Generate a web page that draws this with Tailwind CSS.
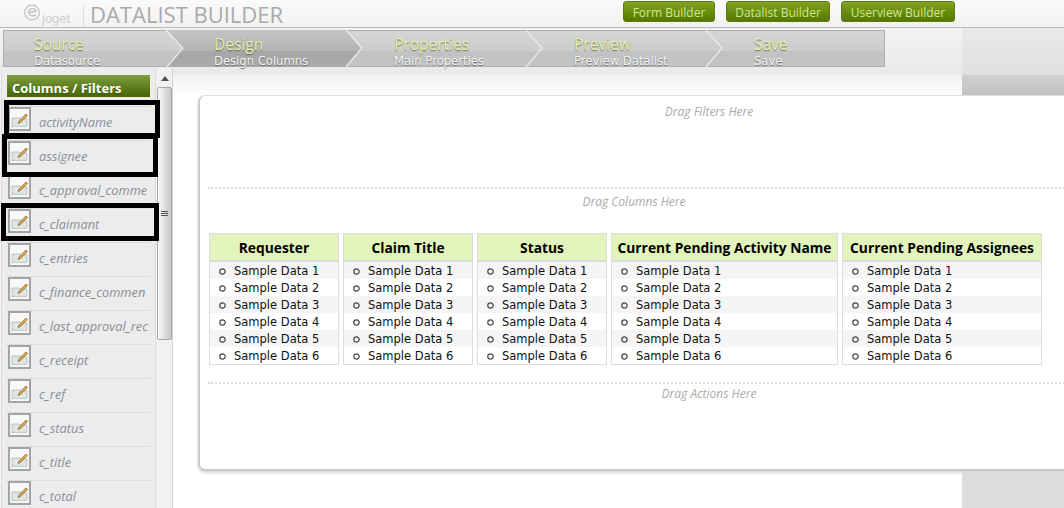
<!DOCTYPE html>
<html lang="en">
  <head>
    <meta charset="UTF-8" />
    <title>Datalist Builder</title>
    <script src="https://cdn.jsdelivr.net/npm/@tailwindcss/browser@4"></script>
  </head>

  <body class="bg-white">
    <div class="relative w-[1064px] h-[508px] overflow-hidden font-['DejaVu_Sans',sans-serif]">
      <!-- Header -->
      <header class="flex items-start h-[28px] bg-gradient-to-b from-[#fafafa] to-[#f2f2f2] border-b border-[#bbbbbb]">
        <svg class="w-[50px] h-[26px] ml-[23px]" viewBox="0 0 50 26">
          <circle cx="9" cy="12.5" r="7.5" fill="#f4f4f4" stroke="#c8c8c8" stroke-width="1.3" />
          <path d="M5 13 L13 11 C12 8 7 8 6 11 C5 15 9 17 13 15" fill="none" stroke="#c4c4c4" stroke-width="1.4" />
        </svg>
        <span class="absolute left-[42px] top-[12px] text-[13px] leading-[14px] text-[#cfcfcf] font-['Liberation_Sans',sans-serif]">joget</span>
        <div class="ml-[10px] mt-[5px] w-px h-[22px] bg-[#dddddd]"></div>
        <h1 class="ml-[6px] text-[22px] leading-[28px] text-[#aaaaaa] font-['Open_Sans',sans-serif] whitespace-nowrap">DATALIST BUILDER</h1>
        <nav class="ml-auto mr-[109px] mt-[1px] flex gap-[11px]">
          <a class="w-[92px] h-[21px] pt-[2px] flex items-center justify-center rounded-[3px] border border-[#5c7a18] bg-gradient-to-b from-[#82a31e] to-[#557800] text-[12px] text-[#cfe98c] font-['Open_Sans',sans-serif]">Form Builder</a>
          <a class="w-[104px] h-[21px] pt-[2px] flex items-center justify-center rounded-[3px] border border-[#5c7a18] bg-gradient-to-b from-[#82a31e] to-[#557800] text-[12px] text-[#cfe98c] font-['Open_Sans',sans-serif]">Datalist Builder</a>
          <a class="w-[114px] h-[21px] pt-[2px] flex items-center justify-center rounded-[3px] border border-[#5c7a18] bg-gradient-to-b from-[#82a31e] to-[#557800] text-[12px] text-[#cfe98c] font-['Open_Sans',sans-serif]">Userview Builder</a>
        </nav>
      </header>

      <div class="relative h-[480px]">
        <!-- right gray strip behind the card -->
        <div class="absolute top-0 right-0 w-[102px] h-full bg-[#dcdcdc]">
          <div class="h-[47px] bg-gradient-to-b from-[#e9e9e9] to-[#e0e0e0]"></div>
          <div class="h-[20px] bg-gradient-to-b from-[#cfcfcf] to-[#c2c2c2]"></div>
        </div>

        <!-- Steps band -->
        <div class="h-[47px] mr-[102px] pt-[2px] pl-[3px] bg-gradient-to-b from-[#f3f3f3] to-[#e9e9e9]">
          <div class="relative flex w-[882px] h-[37px]">
            <svg class="absolute inset-0" width="882" height="37" viewBox="0 0 882 37">
              <defs>
                <linearGradient id="stepBg" x1="0" y1="0" x2="0" y2="1">
                  <stop offset="0" stop-color="#d6d6d6" />
                  <stop offset="0.56" stop-color="#cccccc" />
                  <stop offset="0.57" stop-color="#c2c2c2" />
                  <stop offset="1" stop-color="#c4c4c4" />
                </linearGradient>
                <linearGradient id="stepOn" x1="0" y1="0" x2="0" y2="1">
                  <stop offset="0" stop-color="#c4c4c4" />
                  <stop offset="0.56" stop-color="#b4b4b4" />
                  <stop offset="0.57" stop-color="#a6a6a6" />
                  <stop offset="1" stop-color="#aaaaaa" />
                </linearGradient>
              </defs>
              <rect x="0.5" y="0.5" width="881" height="36" fill="url(#stepBg)" stroke="#b0b0b0" />
              <polygon points="163,0 180,18 164,37 342,37 358,18 342,0" fill="url(#stepOn)" />
              <g fill="none" stroke="#ececec" stroke-width="1.2">
                <polyline points="163,0 180,18 164,37" />
                <polyline points="343,0 359,18 343,37" />
                <polyline points="523,0 539,18 523,37" />
                <polyline points="703,0 719,18 703,37" />
              </g>
            </svg>
            <div class="relative shrink-0 w-[180px] pl-[31px] [text-shadow:0_1px_1px_#6e6e6e]"><p class="text-[15.5px] leading-[20px] mt-[4px] text-[#e6f3a4] font-['Open_Sans',sans-serif]">Source</p><p class="text-[11.6px] leading-[14px] text-[#f4f4f4]">Datasource</p></div>
            <div class="relative shrink-0 w-[180px] pl-[31px] [text-shadow:0_1px_1px_#666666]"><p class="text-[15.5px] leading-[20px] mt-[4px] text-[#e6f3a4] font-['Open_Sans',sans-serif]">Design</p><p class="text-[11.6px] leading-[14px] text-[#f4f4f4]">Design Columns</p></div>
            <div class="relative shrink-0 w-[180px] pl-[31px] [text-shadow:0_1px_1px_#6e6e6e]"><p class="text-[15.5px] leading-[20px] mt-[4px] text-[#e6f3a4] font-['Open_Sans',sans-serif]">Properties</p><p class="text-[11.6px] leading-[14px] text-[#f4f4f4]">Main Properties</p></div>
            <div class="relative shrink-0 w-[180px] pl-[31px] [text-shadow:0_1px_1px_#6e6e6e]"><p class="text-[15.5px] leading-[20px] mt-[4px] text-[#e6f3a4] font-['Open_Sans',sans-serif]">Preview</p><p class="text-[11.6px] leading-[14px] text-[#f4f4f4]">Preview Datalist</p></div>
            <div class="relative shrink-0 w-[120px] pl-[31px] [text-shadow:0_1px_1px_#6e6e6e]"><p class="text-[15.5px] leading-[20px] mt-[4px] text-[#e6f3a4] font-['Open_Sans',sans-serif]">Save</p><p class="text-[11.6px] leading-[14px] text-[#f4f4f4]">Save</p></div>
          </div>
        </div>

        <div class="relative flex h-[433px]">
          <!-- Sidebar -->
          <aside class="relative z-10 flex w-[173px] h-[440px] -mt-[7px] shrink-0 bg-[#f1f1f1] border-r border-[#d4d4d4]">
            <div class="w-[155px] h-full ml-px bg-[#ececec] border-x border-[#dddddd] pl-[5px] pt-[7px]">
              <h2 class="w-[143px] h-[22px] pl-[5px] text-[13px] leading-[26px] font-bold text-white bg-gradient-to-b from-[#7f9f3f] to-[#486400] font-['Open_Sans',sans-serif] [text-shadow:0_1px_1px_#3c5200]">Columns / Filters</h2>
              <ul id="fields" class="w-[143px] mt-[9px]"></ul>
            </div>
            <!-- Scrollbar -->
            <div class="w-[15px] ml-px">
              <div class="h-[19px] flex items-center justify-center pt-[2px]"><div class="w-0 h-0 border-x-[4px] border-x-transparent border-b-[5px] border-b-[#555555]"></div></div>
              <div class="flex flex-col items-center justify-center gap-px h-[253px] rounded-[2px] border border-[#a8a8a8] bg-gradient-to-r from-[#fafafa] via-[#dddddd] to-[#c8c8c8]">
                <div class="w-[7px] h-px bg-[#555555]"></div>
                <div class="w-[7px] h-px bg-[#555555]"></div>
                <div class="w-[7px] h-px bg-[#555555]"></div>
              </div>
            </div>
          </aside>

          <!-- Main -->
          <main class="flex-1 min-w-0 pl-[25px]">
            <div class="h-[20px] -ml-[25px] mr-[102px] bg-gradient-to-b from-[#f2f2f2] to-[#fdfdfd]"></div>
            <div class="relative w-[1022px] h-[376px] rounded-l-[7px] bg-white border-l-2 border-b-2 border-t border-l-[#cccccc] border-b-[#c8c8c8] border-t-[#dddddd] shadow-[0_2px_3px_#d8d8d8]">
              <div class="h-[93px] pt-[8px] ml-[8px] pr-[10px] border-b-2 border-dotted border-[#dddddd] text-center text-[12px] leading-[16px] italic text-[#aaaaaa] font-['Open_Sans',sans-serif]">Drag Filters Here</div>
              <div class="pt-[5px] pr-[152px] text-[12px] leading-[16px] italic text-[#aaaaaa] text-center font-['Open_Sans',sans-serif]">Drag Columns Here</div>
              <div id="columns" class="flex gap-[4px] mt-[23px] ml-[9px]"></div>
              <div class="ml-[8px] mt-[17px] pt-[2px] pr-[10px] border-t-2 border-dotted border-[#dddddd] text-center text-[12px] leading-[16px] italic text-[#aaaaaa] font-['Open_Sans',sans-serif]">Drag Actions Here</div>
            </div>
          </main>
        </div>
      </div>

      <!-- black annotation boxes drawn over the screenshot -->
      <div class="absolute z-20 left-[4px] top-[100px] w-[156px] h-[38px] border-[5px] border-black"></div>
      <div class="absolute z-20 left-[2px] top-[134px] w-[156px] h-[43px] border-[5px] border-black"></div>
      <div class="absolute z-20 left-[1px] top-[203px] w-[158px] h-[38px] border-[5px] border-black"></div>
    </div>

    <script>
      const fields = [
        "activityName",
        "assignee",
        "c_approval_comme",
        "c_claimant",
        "c_entries",
        "c_finance_commen",
        "c_last_approval_rec",
        "c_receipt",
        "c_ref",
        "c_status",
        "c_title",
        "c_total",
      ];
      document.getElementById("fields").innerHTML = fields
        .map(
          (name) => `
          <li class="flex h-[34px] border-t border-dotted border-[#cccccc] overflow-hidden">
            <svg class="w-[23px] h-[24px] shrink-0 ml-px" viewBox="0 0 23 24">
              <rect x="1" y="1" width="21" height="22" fill="#f8f8f8" stroke="#a4a4a4" stroke-width="2" />
              <path d="M4 11h9v1h6v7l-2 1-2-1-2 1-2-1-2 1-2-1-3 1z" fill="#dde6e2" stroke="#a0aaa6" stroke-width="0.6" />
              <path d="M11 14l7-7 1.5 1.5-7 7-2.5 1z" fill="#e0a840" stroke="#6e5420" stroke-width="0.6" />
            </svg>
            <span class="ml-[8px] mt-[7px] text-[12.8px] leading-[16px] italic text-[#8a8f98] whitespace-nowrap font-['Open_Sans',sans-serif]">${name}</span>
          </li>`
        )
        .join("");

      const columns = [
        ["Requester", "w-[130px]"],
        ["Claim Title", "w-[130px]"],
        ["Status", "w-[130px]"],
        ["Current Pending Activity Name", "w-[227px]"],
        ["Current Pending Assignees", "w-[200px]"],
      ];
      document.getElementById("columns").innerHTML = columns
        .map(
          ([title, width]) => `
          <section class="${width} border border-[#dddddd]">
            <h3 class="h-[28px] text-center text-[13.8px] leading-[27px] font-bold text-black bg-[#e2f4bc] border-b-2 border-[#dddddd] font-['Open_Sans',sans-serif] whitespace-nowrap">${title}</h3>
            <ul class="text-[11.5px] text-[#111111]">
              ${[1, 2, 3, 4, 5, 6]
                .map(
                  (n) => `
                <li class="flex items-center h-[17px] pl-[9px] pt-[2px] odd:bg-[#f5f5f5]">
                  <svg class="w-[7px] h-[7px] mr-[8px]" viewBox="0 0 7 7"><circle cx="3.5" cy="3.5" r="2.7" fill="none" stroke="#444444" stroke-width="1.2" /></svg>Sample Data ${n}
                </li>`
                )
                .join("")}
            </ul>
          </section>`
        )
        .join("");
    </script>
  </body>
</html>
